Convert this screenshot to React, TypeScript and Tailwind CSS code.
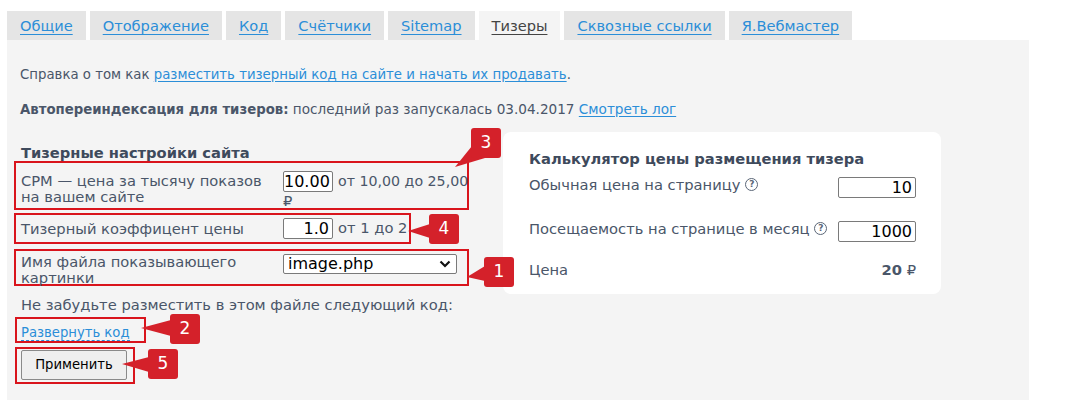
import React from "react";

const tabs = [
  "Общие",
  "Отображение",
  "Код",
  "Счётчики",
  "Sitemap",
  "Тизеры",
  "Сквозные ссылки",
  "Я.Вебмастер",
];

function Badge({ n, x, y }: { n: string; x: number; y: number }) {
  return (
    <div
      className="absolute w-[30px] h-[30px] rounded-[3px] bg-[#d4212a] text-white text-[17px] flex items-center justify-center"
      style={{ left: x, top: y }}
    >
      {n}
    </div>
  );
}

function Help() {
  return (
    <span className="inline-flex ml-[5px] w-[13px] h-[13px] rounded-full border border-[#5a6677] text-[9px] font-bold leading-none items-center justify-center align-[3px] text-[#5a6677]">
      ?
    </span>
  );
}

function NumInput({ v, w = 50 }: { v: string; w?: number }) {
  return (
    <div
      className="h-[21px] border border-[#7a7a7a] rounded-[2px] bg-white text-black text-[16px] leading-[19px] text-right pr-[3px] shrink-0"
      style={{ width: w }}
    >
      {v}
    </div>
  );
}

export default function App() {
  return (
    <div className="relative w-[1065px] h-[400px] overflow-hidden bg-white font-['DejaVu_Sans',sans-serif] text-[#4a5669] text-[14.7px]">
      <div className="pt-[11px] pl-[7px]">
        <div className="flex gap-[4px]">
          {tabs.map((t) => (
            <div
              key={t}
              className={
                t === "Тизеры"
                  ? "h-[29px] px-[13px] flex items-center bg-[#f4f4f4] text-[14.6px] text-[#444] underline underline-offset-[3px]"
                  : "h-[29px] px-[13px] flex items-center bg-[#e5e5e5] text-[14.6px] text-[#2b8ed8] underline underline-offset-[3px]"
              }
            >
              {t}
            </div>
          ))}
        </div>
        <div className="w-[1022px] h-[360px] bg-[#f4f4f4]">
          <div className="pl-[13px] pt-[26px] leading-[18px] text-[13.3px]">
            Справка о том как{" "}
            <span className="text-[#2b8ed8] underline underline-offset-[2px]">
              разместить тизерный код на сайте и начать их продавать
            </span>
            .
          </div>
          <div className="pl-[13px] pt-[16px] leading-[18px] text-[13.3px]">
            <span className="font-bold">Автопереиндексация для тизеров:</span>{" "}
            <span className="text-[13.6px]">последний раз запускалась 03.04.2017 </span>
            <span className="text-[#2b8ed8] text-[13.6px] underline underline-offset-[2px]">Смотреть лог</span>
          </div>

          <div className="flex pl-[7px] pt-[12px] gap-[34px]">
            {/* left column */}
            <div className="w-[455px] shrink-0 pt-[13px]">
              <div className="pl-[7px] font-bold text-[#3e4a5c] leading-[18px]">
                Тизерные настройки сайта
              </div>
              <div className="-mt-[1px] h-[49px] border-2 border-[#d9141c] flex">
                <div className="w-[267px] shrink-0 pl-[5px] pt-[10px] leading-[16px] whitespace-nowrap">
                  CPM — цена за тысячу показов
                  <br />
                  на вашем сайте
                </div>
                <div className="pt-[8px] whitespace-nowrap">
                  <div className="flex items-center gap-[5px]">
                    <NumInput v="10.00" />
                    <span className="text-[14.2px]">от 10,00 до 25,00</span>
                  </div>
                  <div className="leading-[16px] mt-[1px]">₽</div>
                </div>
              </div>
              <div className="mt-[3px] w-[397px] h-[31px] border-2 border-[#d9141c] flex items-center">
                <div className="w-[267px] shrink-0 pl-[5px] leading-[16px] whitespace-nowrap">
                  Тизерный коэффицент цены
                </div>
                <div className="flex items-center gap-[5px] whitespace-nowrap">
                  <NumInput v="1.0" />
                  <span>от 1 до 2</span>
                </div>
              </div>
              <div className="mt-[5px] h-[37px] border-2 border-[#d9141c] flex">
                <div className="w-[267px] shrink-0 pl-[5px] pt-[3px] leading-[16px] whitespace-nowrap">
                  Имя файла показывающего
                  <br />
                  картинки
                </div>
                <div className="pt-[3px]">
                  <div className="w-[174px] h-[20px] border border-[#7a7a7a] rounded-[2px] bg-white text-black text-[16px] leading-[18px] pl-[4px] flex items-center justify-between pr-[5px]">
                    <span>image.php</span>
                    <svg width="12" height="8" viewBox="0 0 12 8">
                      <path d="M1.5 1.5 L6 6 L10.5 1.5" fill="none" stroke="#111" strokeWidth="2.2" />
                    </svg>
                  </div>
                </div>
              </div>
              <div className="pl-[7px] pt-[10px] leading-[18px]">
                Не забудьте разместить в этом файле следующий код:
              </div>
              <div className="mt-[3px] ml-[1px] w-[131px] h-[26px] border-2 border-[#d9141c] pl-[4px] pt-[2px]">
                <span className="text-[#2b8ed8] text-[13.2px] leading-[18px] border-b border-dashed border-[#2b8ed8]">
                  Развернуть код
                </span>
              </div>
              <div className="mt-[4px] ml-[1px] w-[120px] h-[37px] border-2 border-[#d9141c] pl-[4px] pt-[1px]">
                <div className="w-[106px] h-[30px] border border-[#8a8a8a] rounded-[2px] bg-[#efefef] text-black text-[13.2px] flex items-center justify-center">
                  Применить
                </div>
              </div>
            </div>

            {/* right card */}
            <div className="w-[438px] h-[162px] bg-white rounded-[8px] mt-[1px] pl-[26px] pr-[25px] pt-[18px]">
              <div className="font-bold text-[#3e4a5c] leading-[18px]">
                Калькулятор цены размещения тизера
              </div>
              <div className="flex justify-between items-start mt-[8px]">
                <div className="leading-[18px]">
                  Обычная цена на страницу
                  <Help />
                </div>
                <div className="mt-[1px]">
                  <NumInput v="10" w={78} />
                </div>
              </div>
              <div className="flex justify-between items-start mt-[22px]">
                <div className="leading-[18px]">
                  Посещаемость на странице в месяц
                  <Help />
                </div>
                <div className="mt-[1px]">
                  <NumInput v="1000" w={78} />
                </div>
              </div>
              <div className="flex justify-between mt-[19px] leading-[18px]">
                <span>Цена</span>
                <span>
                  <span className="font-bold">20</span> ₽
                </span>
              </div>
            </div>
          </div>
        </div>
      </div>

      {/* annotation tails */}
      <svg className="absolute left-0 top-0 pointer-events-none" width="1065" height="400">
        <polygon points="472,146 485,158 455,167" fill="#d4212a" />
        <polygon points="430,224 430,238 408,231" fill="#d4212a" />
        <polygon points="485,266 485,281 467,277" fill="#d4212a" />
        <polygon points="171,320 171,336 141,328" fill="#d4212a" />
        <polygon points="149,357 149,372 122,364" fill="#d4212a" />
      </svg>
      <Badge n="3" x={471} y={128} />
      <Badge n="4" x={429} y={214} />
      <Badge n="1" x={484} y={257} />
      <Badge n="2" x={170} y={314} />
      <Badge n="5" x={148} y={349} />
    </div>
  );
}
